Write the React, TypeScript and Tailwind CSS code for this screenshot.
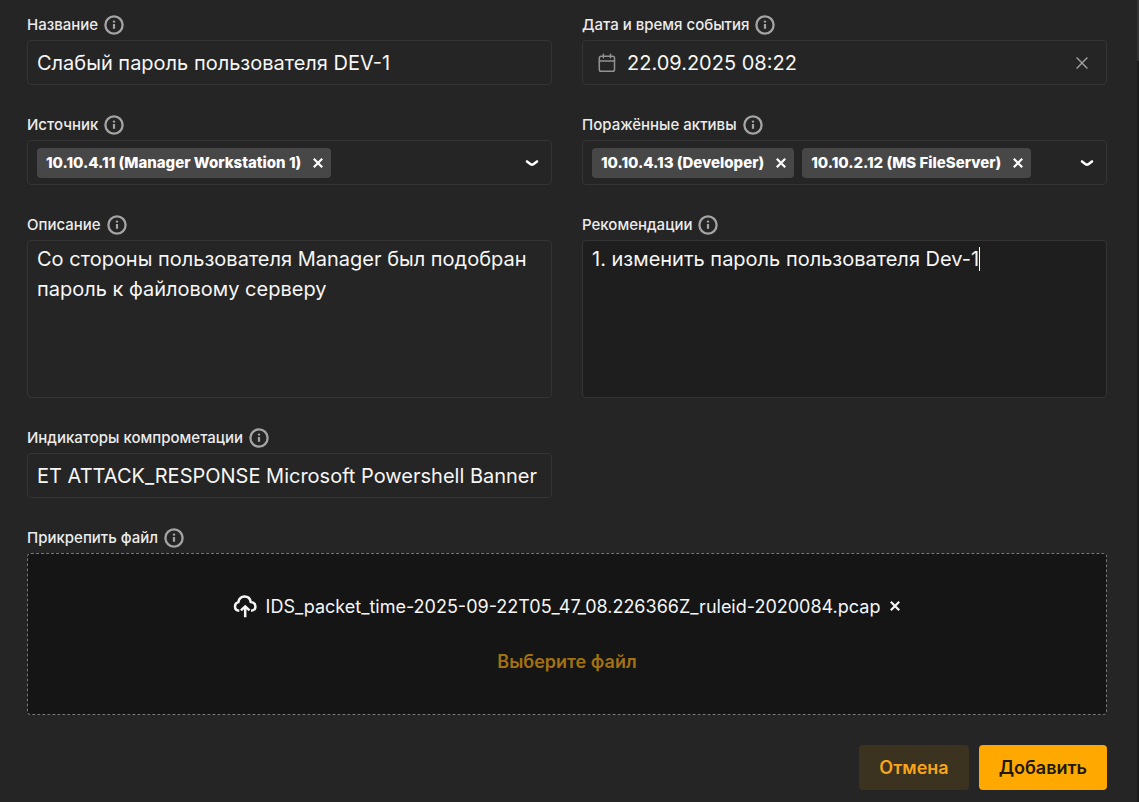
import React from "react";

type FieldProps = { id: string; label: string; children: React.ReactNode; className?: string };

const InfoIcon = () => (
  <svg viewBox="0 0 20 20" className="size-5 text-[#a4a4a4]" fill="none" stroke="currentColor" aria-hidden="true">
    <circle cx="10" cy="10" r="8.6" strokeWidth="2.3" />
    <path d="M10 9v4.800" strokeWidth="2.200" />
    <circle cx="10" cy="6.600" r="1.200" fill="currentColor" stroke="none" />
  </svg>
);

const CrossIcon = () => (
  <svg viewBox="0 0 12 12" className="size-3" fill="none" stroke="currentColor" strokeWidth="2.2" aria-hidden="true">
    <path d="M1.800 1.800l8.400 8.400M10.200 1.800l-8.400 8.400" />
  </svg>
);

const ChevronIcon = () => (
  <svg viewBox="0 0 14 8" className="h-2 w-3.5" fill="none" stroke="currentColor" strokeWidth="2.500" strokeLinecap="round" strokeLinejoin="round" aria-hidden="true">
    <path d="M2 2.400l4 3q1 .5 2 0l4-3" />
  </svg>
);

const CalendarIcon = () => (
  <svg viewBox="0 0 20 20" className="size-5 shrink-0 text-[#929292]" fill="none" stroke="currentColor" strokeWidth="1.500" strokeLinecap="round" strokeLinejoin="round" aria-hidden="true">
    <rect x="2.300" y="3.200" width="15.200" height="15" rx="1.800" />
    <path d="M2.300 8h15.200M6.400 1.300v3.500M13.500 1.300v3.500" />
  </svg>
);

const UploadIcon = () => (
  <svg viewBox="0 0 24 24" className="size-6 shrink-0" fill="none" stroke="currentColor" strokeWidth="2.500" aria-hidden="true">
    <path d="M6.300 16.700C3.500 16.500 2 14.600 2 12.400c0-2.200 1.300-3.800 3.300-4.300C6.100 4.600 8.300 2.500 11.400 2.500c3.300 0 5.800 2.200 6.300 5.400 2.700.3 4.700 2.100 4.700 4.500 0 2.300-1.700 4.100-4.400 4.300" />
    <path d="M12.200 23.200v-10M7.900 16.400l4.300-4 4.300 4" />
  </svg>
);

const Field = ({ id, label, children, className = "" }: FieldProps) => (
  <div className={className}>
    <div className="flex h-[30px] items-center gap-[6px]">
      <label htmlFor={id} className="text-[15px] font-medium text-[#ececec]">{label}</label>
      <InfoIcon />
    </div>
    {children}
  </div>
);

const box = "w-full rounded border border-[#343434]";

const TagSelect = ({ id, tags }: { id: string; tags: string[] }) => (
  <div className={`${box} flex h-[45px] items-center gap-2 pl-[9px] pr-3`}>
    {tags.map((tag) => (
      <span key={tag} className="flex h-[30px] items-center gap-[11px] whitespace-nowrap rounded bg-[#474747] pl-[9px] pr-[7px] text-[15px] font-extrabold leading-[30px] text-white">
        {tag}
        <button type="button" aria-label={`Удалить ${tag}`}><CrossIcon /></button>
      </span>
    ))}
    <input id={id} className="min-w-0 flex-1 bg-transparent outline-none" />
    <button type="button" aria-label="Открыть список" className="text-white"><ChevronIcon /></button>
  </div>
);

export default function App() {
  return (
    <div className="flex min-h-screen bg-[#252525] font-[Inter,sans-serif] text-[#f6f6f6]">
      <main className="min-w-0 flex-1">
        <form className="pb-3 pl-[27px] pr-[30px] pt-[10px]">
          <div className="grid grid-cols-2 gap-x-[30px] gap-y-[25px]">
            <Field id="title" label="Название">
              <input id="title" className={`${box} block h-[45px] bg-transparent px-[9px] text-[20px] outline-none`} defaultValue="Слабый пароль пользователя DEV-1" />
            </Field>
            <Field id="date" label="Дата и время события">
              <div className={`${box} flex h-[45px] items-center gap-[10px] pl-[14px] pr-[18px]`}>
                <CalendarIcon />
                <input id="date" className="min-w-0 flex-1 bg-transparent text-[20px] outline-none" defaultValue="22.09.2025 08:22" />
                <button type="button" aria-label="Очистить дату" className="text-[#a0a0a0]">
                  <svg viewBox="0 0 12 12" className="size-3" fill="none" stroke="currentColor" strokeWidth="1.400" aria-hidden="true">
                    <path d="M.6.6l10.800 10.800M11.400.6L.6 11.400" />
                  </svg>
                </button>
              </div>
            </Field>
            <Field id="source" label="Источник">
              <TagSelect id="source" tags={["10.10.4.11 (Manager Workstation 1)"]} />
            </Field>
            <Field id="assets" label="Поражённые активы">
              <TagSelect id="assets" tags={["10.10.4.13 (Developer)", "10.10.2.12 (MS FileServer)"]} />
            </Field>
            <Field id="description" label="Описание">
              <textarea id="description" className={`${box} block h-[158px] resize-none bg-transparent px-[9px] py-[3px] text-[20px] leading-[30px] outline-none`} defaultValue="Со стороны пользователя Manager был подобран пароль к файловому серверу" />
            </Field>
            <Field id="advice" label="Рекомендации">
              <div className="relative">
                <textarea id="advice" className={`${box} block h-[158px] resize-none bg-[#1e1e1e] px-[9px] py-[3px] text-[20px] leading-[30px] caret-transparent outline-none`} defaultValue="1. изменить пароль пользователя Dev-1" />
                <span className="pointer-events-none absolute left-[397px] top-[7px] h-6 w-px bg-white" aria-hidden="true" />
              </div>
            </Field>
            <Field id="indicators" label="Индикаторы компрометации">
              <input id="indicators" className={`${box} block h-[45px] bg-transparent px-[9px] text-[20px] outline-none`} defaultValue="ET ATTACK_RESPONSE Microsoft Powershell Banner" />
            </Field>
            <Field id="file" label="Прикрепить файл" className="col-span-2">
              <div className="flex h-[162px] flex-col items-center rounded border border-dashed border-[#777777] bg-[#151515] pt-[37px]">
                <div className="flex h-[30px] items-center gap-[9px] text-[18px]">
                  <UploadIcon />
                  <span>IDS_packet_time-2025-09-22T05_47_08.226366Z_ruleid-2020084.pcap</span>
                  <button type="button" aria-label="Удалить файл"><CrossIcon /></button>
                </div>
                <label htmlFor="file" className="mt-[26px] cursor-pointer text-[18px] font-semibold leading-[30px] text-[#a37112]">Выберите файл</label>
                <input id="file" type="file" className="sr-only" />
              </div>
            </Field>
          </div>
          <div className="mt-[30px] flex justify-end gap-[10px]">
            <button type="button" className="h-[45px] rounded bg-[#3c3220] px-5 text-[18px] font-semibold text-[#f8a51b]">Отмена</button>
            <button type="submit" className="h-[45px] rounded bg-[#ffa900] px-5 text-[18px] font-semibold text-[#1e1804]">Добавить</button>
          </div>
        </form>
      </main>
      <div className="w-[2px] bg-[#1b1b1b]" aria-hidden="true">
        <div className="h-[61px] bg-[#343434]" />
      </div>
    </div>
  );
}
